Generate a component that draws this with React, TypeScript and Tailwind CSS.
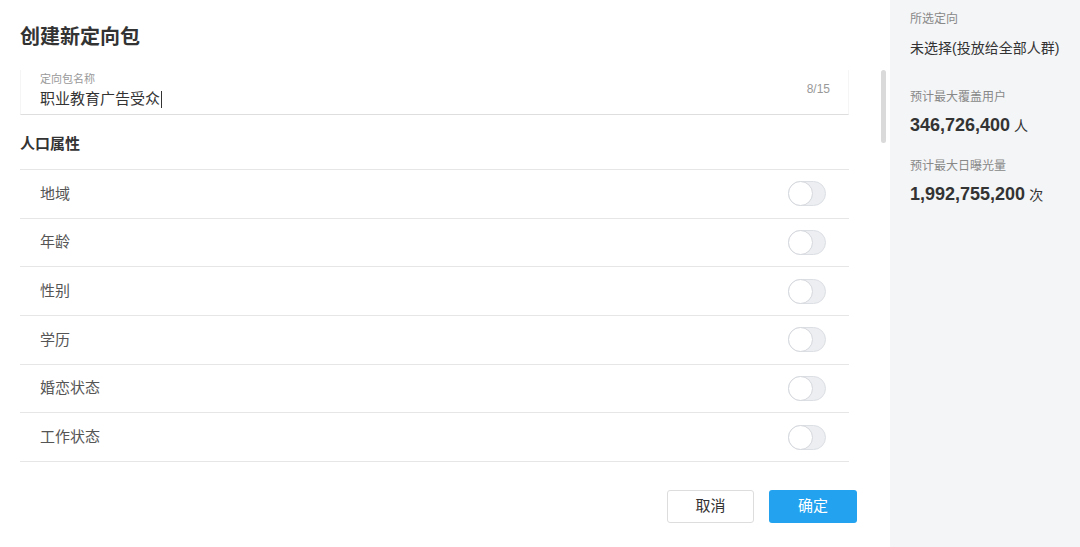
import React from 'react';

const font = { fontFamily: '"Liberation Sans", "Noto Sans CJK SC", sans-serif' };

const rows = ['地域', '年龄', '性别', '学历', '婚恋状态', '工作状态'];

function Toggle() {
  return (
    <div className="relative h-[25px] w-[38px] rounded-full border border-[#dcdfe4] bg-[#eceef1]">
      {/* knob */}
      <div className="absolute -left-px -top-px h-[25px] w-[25px] rounded-full border border-[#d4d7dc] bg-white" />
    </div>
  );
}

export default function App() {
  return (
    <div className="flex h-[547px] w-[1080px] bg-white text-[#333]" style={font}>
      {/* Main form */}
      <div className="relative w-[890px] px-5 pt-[23px]">
        <h1 className="h-7 text-[20px] font-bold leading-7 text-[#333]">创建新定向包</h1>

        {/* Name input */}
        <div className="mt-[19px] flex h-[45px] w-[829px] justify-between border-x border-b border-x-[#f5f5f5] border-b-[#dedede] pl-[19px] pr-[18px]">
          <div>
            <div className="h-[18px] text-[11px] leading-[18px] text-[#999]">定向包名称</div>
            <div className="flex h-[22px] items-center text-[15px] leading-[22px] text-[#333]">
              职业教育广告受众
              <span className="ml-px inline-block h-[17px] w-px bg-[#333]" />
            </div>
          </div>
          <div className="mt-[11px] text-[12px] leading-4 text-[#999]">8/15</div>
        </div>

        <h2 className="mt-[19px] h-5 text-[15px] font-bold leading-5 text-[#333]">人口属性</h2>

        {/* Attribute rows */}
        <div className="mt-[15px] w-[829px] border-b border-[#e6e6e6]">
          {rows.map((r) => (
            <div
              key={r}
              className="flex h-[48.7px] items-center justify-between border-t border-[#e6e6e6] pl-5 pr-[23px]"
            >
              <span className="text-[15px] text-[#555]">{r}</span>
              <Toggle />
            </div>
          ))}
        </div>

        {/* Actions */}
        <div className="mt-[28px] flex w-[837px] justify-end gap-[15px]">
          <button className="h-[33px] w-[87px] rounded-[3px] border border-[#dddddd] bg-white text-[15px] text-[#333]">
            取消
          </button>
          <button className="h-[33px] w-[88px] rounded-[3px] bg-[#22a2ef] text-[15px] text-white">
            确定
          </button>
        </div>

        {/* scrollbar thumb */}
        <div className="absolute left-[881px] top-[70px] h-[73px] w-[5px] rounded-full bg-[#dadada]" />
      </div>

      {/* Summary side panel */}
      <div className="flex-1 bg-[#f4f5f7] px-5 pt-[10px]">
        <div className="h-[18px] text-[12px] leading-[18px] text-[#888]">所选定向</div>
        <div className="mt-[10px] h-5 text-[14px] leading-5 text-[#333]">未选择(投放给全部人群)</div>

        <div className="mt-[30px] h-[18px] text-[12px] leading-[18px] text-[#888]">预计最大覆盖用户</div>
        <div className="mt-[8px] flex h-[22px] items-baseline leading-[22px]">
          <span className="text-[18px] font-bold text-[#333]">346,726,400</span>
          <span className="ml-1 text-[14px] text-[#333]">人</span>
        </div>

        <div className="mt-[21px] h-[18px] text-[12px] leading-[18px] text-[#888]">预计最大日曝光量</div>
        <div className="mt-[8px] flex h-[22px] items-baseline leading-[22px]">
          <span className="text-[18px] font-bold text-[#333]">1,992,755,200</span>
          <span className="ml-1 text-[14px] text-[#333]">次</span>
        </div>
      </div>
    </div>
  );
}
